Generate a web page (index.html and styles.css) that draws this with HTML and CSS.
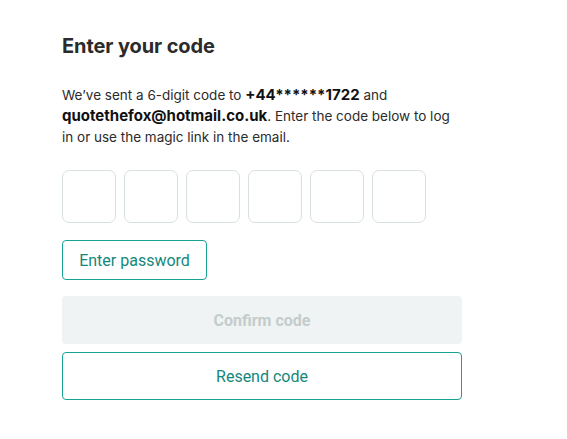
FILE: index.html
```html
<!DOCTYPE html>
<html>
<head>
<meta charset="utf-8">
<link rel="stylesheet" href="styles.css">
</head>
<body>
<main class="panel">
  <h1 class="title">Enter your code</h1>
  <p class="intro">We’ve sent a 6-digit code to <strong class="em">+44******1722</strong> and <strong class="em">quotethefox@hotmail.co.uk</strong>. Enter the code below to log in or use the magic link in the email.</p>
  <div class="code-row">
    <input class="code-box" type="text" maxlength="1">
    <input class="code-box" type="text" maxlength="1">
    <input class="code-box" type="text" maxlength="1">
    <input class="code-box" type="text" maxlength="1">
    <input class="code-box" type="text" maxlength="1">
    <input class="code-box" type="text" maxlength="1">
  </div>
  <button class="btn btn-outline btn-small">Enter password</button>
  <button class="btn btn-disabled btn-wide">Confirm code</button>
  <button class="btn btn-outline btn-wide">Resend code</button>
</main>
</body>
</html>
```
FILE: styles.css
```css
html, body {
  margin: 0;
  padding: 0;
  background: #ffffff;
}
body {
  font-family: "Inter", "Noto Sans", sans-serif;
  color: #2b2b2b;
}
.panel {
  width: 400px;
  padding: 33px 0 0 62px;
  display: flex;
  flex-direction: column;
  align-items: flex-start;
}
.title {
  margin: 0;
  font-size: 20px;
  line-height: 26px;
  font-weight: 700;
  color: #2b2b2b;
  letter-spacing: -0.1px;
}
.intro {
  margin: 26px 0 0;
  font-size: 13.5px;
  line-height: 21px;
  color: #2b2b2b;
  width: 395px;
}
.em {
  font-weight: 700;
  font-size: 15px;
  line-height: 1;
  color: #111;
}
.code-row {
  display: flex;
  gap: 8px;
  margin-top: 22px;
}
.code-box {
  box-sizing: border-box;
  width: 54px;
  height: 53px;
  border: 1px solid #d9e0e0;
  border-radius: 7px;
  background: #fff;
  margin: 0;
  padding: 0;
  outline: none;
}
.btn {
  box-sizing: border-box;
  font-family: "Roboto", "Liberation Sans", sans-serif;
  font-size: 16px;
  border-radius: 4px;
  margin: 0;
  padding: 0;
  cursor: pointer;
}
.btn-outline {
  background: #fff;
  border: 1px solid #17a193;
  color: #13877c;
}
.btn-small {
  margin-top: 17px;
  width: 145px;
  height: 40px;
}
.btn-wide {
  width: 400px;
  height: 48px;
}
.btn-disabled {
  margin-top: 16px;
  background: #eff3f3;
  border: none;
  color: #c5cccc;
  font-weight: 700;
}
.btn-disabled + .btn-wide {
  margin-top: 8px;
}
```
